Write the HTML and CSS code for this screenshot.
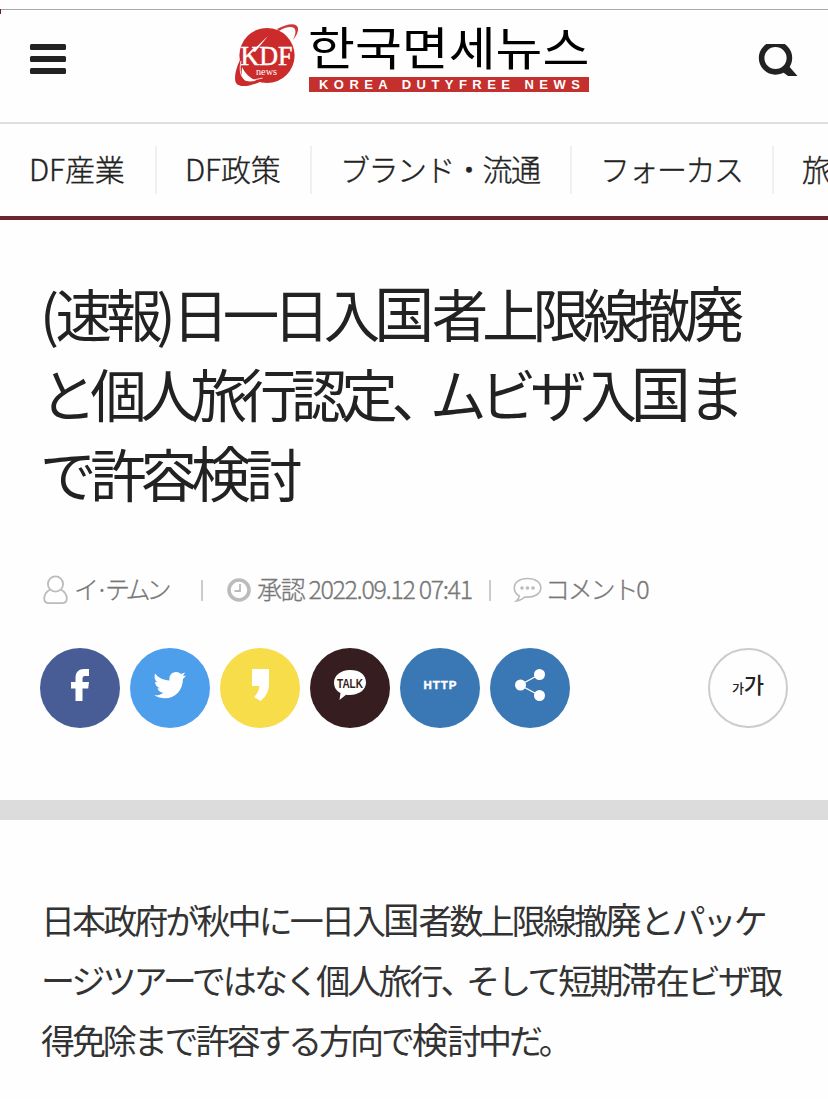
FILE: index.html
```html
<!DOCTYPE html>
<html lang="ja">
<head>
<meta charset="utf-8">
<title>韓国免税ニュース</title>
<link rel="stylesheet" href="styles.css">
</head>
<body>
<header class="header">
  <button class="menu" aria-label="menu"><i></i><i></i><i></i></button>
  <a class="logo">
    <svg class="emblem" width="66" height="66" viewBox="0 0 66 66">
      <circle cx="32" cy="32.500" r="27.600" fill="#cb2b2b"/>
      <path d="M42 6C53 0 62-.5 63 5c.3 3.500-1 7-5 12 2.500-5.500 3.500-9.500 1-12-3-2-9-1-15 3z" fill="#cb3a3a"/>
      <path d="M5 37C0 47-1 56 1 60c4 6 19 3 33-6-12 4-21 6-24.500 3C6 54 6 47 8 41z" fill="#cb2b2b"/>
      <path d="M6 38C4 48 6 54 9.500 56c4 2 10 1 18-1" fill="none" stroke="#fff" stroke-width=".9"/>
      <path d="M17 28 33 13 20 29z" fill="#fff"/>
      <text class="kdf" x="5.500" y="42" textLength="52" lengthAdjust="spacingAndGlyphs">KDF</text>
      <text class="kdf-news" x="21" y="52" textLength="21" lengthAdjust="spacingAndGlyphs">news</text>
    </svg>
    <span class="wordmark">
      <span class="name" lang="ko">한국면세뉴스</span>
      <span class="tag">KOREA DUTYFREE NEWS</span>
    </span>
  </a>
  <svg class="search" width="40" height="32" viewBox="0 0 40 32">
    <circle cx="17.500" cy="14" r="13.900" fill="none" stroke="#222" stroke-width="5.600"/>
    <path d="M22 26 29 20 39.500 32H30z" fill="#222"/>
  </svg>
</header>
<nav class="nav">
  <a class="n1">DF産業</a><a class="n2">DF政策</a><a class="n3">ブランド・流通</a><a class="n4">フォーカス</a><a class="n5">旅行</a>
</nav>
<main>
  <section class="head">
    <h1 class="title">
      <span class="t1"><i>(</i>速報<i>)</i>日一日入<b>国</b>者上限線撤<b>廃</b></span>
      <span class="t2">と個人旅行認定<em>、</em>ムビザ入<b>国</b>ま</span>
      <span class="t3">で許容<b>検</b>討</span>
    </h1>
    <div class="meta">
      <svg width="26" height="30" viewBox="0 0 26 30" fill="none" stroke="#bbb" stroke-width="1.8"><circle cx="12.5" cy="9" r="7.6"/><path d="M7 14.5C3 17 1.2 20 1.2 23.5c0 3.5 1.8 4.7 5 4.7h12.6c3.2 0 5-1.2 5-4.7 0-3.5-1.8-6.5-5.8-9"/></svg>
      <span class="author">イ·テムン</span>
      <i class="bar"></i>
      <svg class="clock" width="24" height="24" viewBox="0 0 24 24" fill="none" stroke="#bbb"><circle cx="12" cy="12" r="10" stroke-width="3.6"/><path d="M13 6v7H7.500" stroke-width="1.8"/></svg>
      <span class="date">承認 2022.09.12 07:41</span>
      <i class="bar bar2"></i>
      <svg class="bubble" width="29" height="26" viewBox="0 0 29 26" fill="none" stroke="#bbb" stroke-width="1.6"><path d="M14.500 1.500C6.500 1.500 1.300 5.300 1.300 11c0 3.700 2 6.300 5 8-.2 2-1.200 3.500-3 5 4-.5 6.500-2 8.500-4 9.500 1 16-3.200 16-9S22.500 1.500 14.500 1.500z"/><g fill="#bbb" stroke="none"><circle cx="9" cy="11" r="1.8"/><circle cx="14.500" cy="11" r="1.800"/><circle cx="20" cy="11" r="1.800"/></g></svg>
      <span class="comments">コメント0</span>
    </div>
    <div class="share">
      <a class="round fb"><svg viewBox="0 0 80 80"><path d="M49 21v7h-4c-2 0-2.500 1-2.500 3v3H49l-.8 6.500h-5.700V53H35.500V40.500H31V34h4.500v-4c0-6 3.500-9 8.500-9z" fill="#fff"/></svg></a>
      <a class="round tw"><svg viewBox="0 0 80 80"><path d="M25 25.500c3.500 4.500 8 6.500 14.500 7-.8-5 2.300-8.500 6.500-8.500 2 0 3.800.8 5 2l4-1.500-2 3.500 3-.3-3 3.300C52.500 42 46 50.300 35 50.300c-4 0-7.500-1-10.800-3 3.500.2 6.500-.6 9-2.600-3-.3-5-2-5.700-4.500h2.500c-3-1-5-3.400-5-6.500l2.500.8c-2.800-2.200-3.500-5.500-2.500-9z" fill="#fff"/></svg></a>
      <a class="round ks"><svg viewBox="0 0 80 80"><path d="M32 21h17v15c0 7-3 12.500-8.500 17L34 49c3-3 5-6 5.500-11H32z" fill="#fff"/></svg></a>
      <a class="round talk"><svg viewBox="0 0 80 80"><path d="M40 22c-9.500 0-16 5.600-16 12.500 0 5 2.500 8.500 6.500 10.500l-1 7 6.500-5.300c12 1.300 20-4.200 20-12.200S49.500 22 40 22z" fill="#fff"/><text x="27" y="40" textLength="26" lengthAdjust="spacingAndGlyphs" class="talk-t">TALK</text></svg></a>
      <a class="round http"><svg viewBox="0 0 80 80"><text x="23.500" y="41" textLength="33" class="http-t">HTTP</text></svg></a>
      <a class="round nodes"><svg viewBox="0 0 80 80" fill="#fff"><path d="M49.500 26.500 30 37l19.500 10.500" fill="none" stroke="#fff" stroke-width="1.300"/><circle cx="49.500" cy="26.500" r="5.500"/><circle cx="30.500" cy="37" r="5.500"/><circle cx="49.500" cy="47.500" r="5.500"/></svg></a>
      <a class="round size" lang="ko"><small>가</small><span>가</span></a>
    </div>
  </section>
  <div class="band"></div>
  <article class="body">
    <p class="b1">日本政府が秋中に一日入<b>国</b>者数上限線撤<b>廃</b>とパッケ</p>
    <p class="b2">ージツアーではなく個人旅行<em>、</em>そして短期<b>滞</b>在ビザ取</p>
    <p class="b3">得免除まで許容する方向で<b>検</b>討中だ。</p>
  </article>
</main>
</body>
</html>
```
FILE: styles.css
```css
* { box-sizing: border-box; }
body {
  margin: 0;
  height: 1099px;
  overflow: hidden;
  background: #fefefe;
  color: #222;
  font-family: "Noto Sans CJK JP", "Noto Sans CJK KR", sans-serif;
}
i, em { font-style: normal; }
.header {
  display: flex;
  align-items: flex-start;
  height: 124px;
  padding: 0 30px;
  border-bottom: 2px solid #dfdfdf;
  background: linear-gradient(#5b2430, #5b2430) 0 9px / 1px 5px no-repeat,
              linear-gradient(#a8a8a8, #a8a8a8) 0 9px / 100% 1px no-repeat;
}
.menu {
  display: flex;
  flex-direction: column;
  gap: 6px;
  width: 36px;
  margin: 44px 0 0;
  padding: 0;
  border: 0;
  background: none;
}
.menu i { height: 6px; border-radius: 1.5px; background: #222; }
.logo { display: flex; margin: 23px 0 0 168px; }
.emblem { margin-left: 1px; overflow: visible; }
.kdf { font: 28px "Liberation Serif", serif; fill: #fff; stroke: #fff; stroke-width: .5px; }
.kdf-news { font: 10px "Liberation Serif", serif; fill: #fff; }
.wordmark { display: flex; flex-direction: column; width: 282px; margin-left: 7px; }
.name {
  width: 254px;
  height: 54px;
  font: 400 46px/44px "Noto Sans CJK KR", sans-serif;
  transform: scaleX(1.108);
  transform-origin: 0 0;
  color: #000;
  white-space: nowrap;
}
.tag {
  width: 280px;
  height: 15px;
  margin-left: 1px;
  padding-left: 10px;
  background: #c4302d;
  color: #fff;
  font: bold 13px/15px "Liberation Sans", sans-serif;
  letter-spacing: 5.45px;
  white-space: nowrap;
}
.search { margin: 44px 0 0 auto; }
.nav {
  display: flex;
  align-items: center;
  height: 96px;
  border-bottom: 4px solid #6b252d;
  overflow: hidden;
  font-weight: 300;
  font-size: 30px;
  line-height: 45px;
  letter-spacing: -1.5px;
  white-space: nowrap;
  -webkit-text-stroke: .35px currentColor;
}
.nav a { flex: none; height: 48px; padding-left: 28px; border-right: 2px solid #f0f0f0; }
.nav .n1, .nav .n2 { letter-spacing: -.1px; }
.nav .n1 { width: 157px; padding-left: 29px; }
.n2 { width: 155px; }
.n3 { width: 260px; }
.n4 { width: 202px; }
.n5 { width: 120px; }
.head { height: 580px; padding: 52px 40px 0; }
.title { margin: 0; font-size: 56.5px; font-weight: 400; line-height: 80px; letter-spacing: -6.2px; }
.title span { display: block; white-space: nowrap; }
.title b { font-size: 60px; font-weight: 400; line-height: 1px; letter-spacing: -2.5px; }
.title i { letter-spacing: -3.5px; }
.title em { letter-spacing: -18px; }
.title .t1 { letter-spacing: -6px; }
.title .t2 { letter-spacing: -6.3px; }
.title .t3 b { letter-spacing: -5px; }
.meta {
  display: flex;
  align-items: center;
  height: 40px;
  margin-top: 58px;
  padding-left: 3px;
  color: #777;
  font-size: 25px;
  font-weight: 300;
  line-height: 36px;
  letter-spacing: -2px;
  white-space: nowrap;
  -webkit-text-stroke: .3px currentColor;
}
.meta span { height: 40px; }
.author { width: 127px; margin-left: 5px; letter-spacing: -3.8px; }
.bar { width: 2px; height: 21px; background: #ccc; }
.clock { margin-left: 24px; }
.date { width: 232px; margin-left: 6px; letter-spacing: -1.35px; }
.bubble { margin-left: 22px; }
.comments { margin-left: 3px; letter-spacing: -2.2px; }
.share { display: flex; gap: 10px; margin-top: 38px; }
.round { width: 80px; height: 80px; border-radius: 50%; }
.round svg { display: block; }
.fb { background: #485d96; }
.tw { background: #4d9fec; }
.ks { background: #f8dd4b; }
.talk { background: #361e20; }
.http, .nodes { background: #3a77b5; }
.talk-t { font: bold 12px "Liberation Sans", sans-serif; fill: #361e20; }
.http-t { font: bold 11.5px "Liberation Sans", sans-serif; fill: #fff; stroke: #fff; stroke-width: .4px; }
.size {
  display: flex;
  align-items: baseline;
  justify-content: center;
  margin-left: auto;
  border: 2px solid #ccc;
  font: 500 22px/67px "Noto Sans CJK KR", sans-serif;
}
.size small { font-size: 13px; }
.band { height: 20px; background: #dcdcdc; }
.body { padding: 70px 0 0 41px; color: #333; font-size: 34px; line-height: 60px; letter-spacing: -2.9px; }
.body p { margin: 0; white-space: nowrap; }
.body b { font-size: 36.5px; font-weight: 400; line-height: 1px; letter-spacing: -1.2px; }
.body em { letter-spacing: -8.5px; }
.body .b2 { letter-spacing: -2.9px; }
.body .b3 { letter-spacing: -3.1px; }
```
